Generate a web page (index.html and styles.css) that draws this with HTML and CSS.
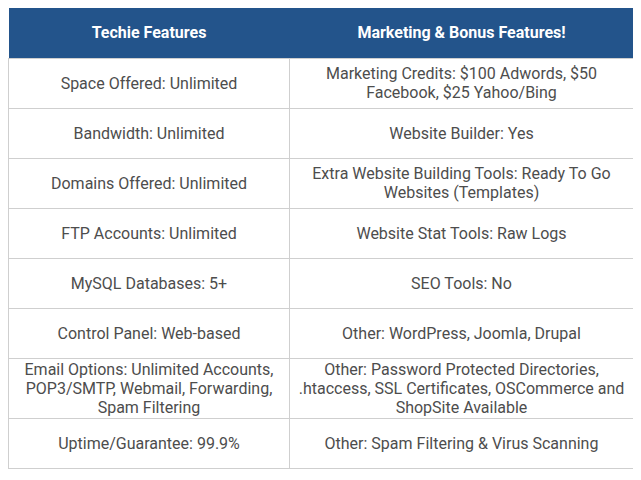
FILE: index.html
```html
<!DOCTYPE html>
<html>
<head>
<meta charset="utf-8">
<link rel="stylesheet" href="styles.css">
</head>
<body>
<table class="features">
  <colgroup><col class="col-a"><col class="col-b"></colgroup>
  <thead>
    <tr><th>Techie Features</th><th>Marketing &amp; Bonus Features!</th></tr>
  </thead>
  <tbody>
    <tr><td>Space Offered: Unlimited</td><td>Marketing Credits: $100 Adwords, $50 Facebook, $25 Yahoo/Bing</td></tr>
    <tr><td>Bandwidth: Unlimited</td><td>Website Builder: Yes</td></tr>
    <tr><td>Domains Offered: Unlimited</td><td>Extra Website Building Tools: Ready To Go Websites (Templates)</td></tr>
    <tr><td>FTP Accounts: Unlimited</td><td>Website Stat Tools: Raw Logs</td></tr>
    <tr><td>MySQL Databases: 5+</td><td>SEO Tools: No</td></tr>
    <tr><td>Control Panel: Web-based</td><td>Other: WordPress, Joomla, Drupal</td></tr>
    <tr><td>Email Options: Unlimited Accounts, POP3/SMTP, Webmail, Forwarding, Spam Filtering</td><td>Other: Password Protected Directories, .htaccess, SSL Certificates, OSCommerce and ShopSite Available</td></tr>
    <tr><td>Uptime/Guarantee: 99.9%</td><td>Other: Spam Filtering &amp; Virus Scanning</td></tr>
  </tbody>
</table>
</body>
</html>
```
FILE: styles.css
```css
body {
  margin: 8px;
  background: #fff;
  font-family: Roboto, "Liberation Sans", sans-serif;
}
.features {
  width: 625px;
  border-collapse: collapse;
  table-layout: fixed;
  font-size: 16px;
  line-height: 19px;
  color: #4d4d4d;
}
.col-a { width: 281px; }
.col-b { width: 344px; }
.features tr { height: 50px; }
.features th {
  background: #23548b;
  color: #fff;
  font-weight: bold;
  padding: 0 6px;
  text-align: center;
  vertical-align: middle;
}
.features td {
  border: 1px solid #cfcfcf;
  padding: 1px 6px;
  text-align: center;
  vertical-align: middle;
}
```
